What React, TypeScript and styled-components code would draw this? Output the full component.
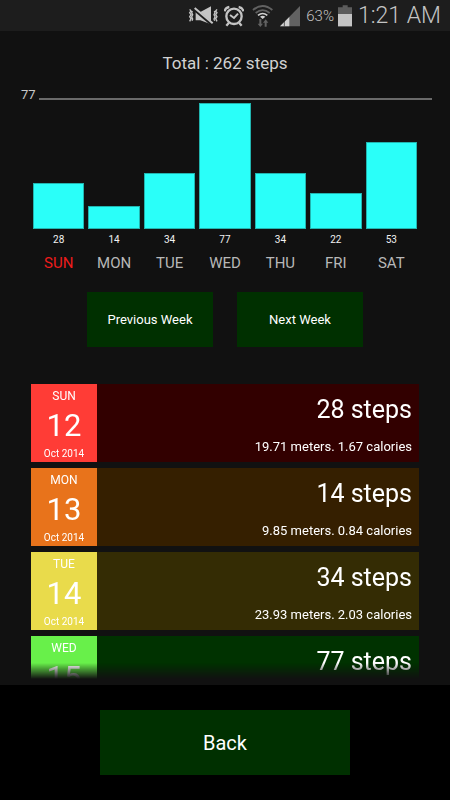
import React from "react";
import styled, { createGlobalStyle } from "styled-components";

const GlobalStyle = createGlobalStyle`
  *, *::before, *::after { box-sizing: border-box; }
  body { margin: 0; background: #000; }
  body, button { font-family: Roboto, "Noto Sans", sans-serif; }
`;

const Screen = styled.div`
  display: flex;
  flex-direction: column;
  height: 100vh;
  background: #000;
  color: #fff;
`;

const StatusBar = styled.header`
  display: flex;
  flex-shrink: 0;
  align-items: center;
  justify-content: flex-end;
  gap: 6px;
  height: 31px;
  padding-right: 9px;
  background: #1d1d1d;
  color: #c4c4c4;
`;

const StatusIcon = styled.svg`
  display: block;
  flex-shrink: 0;
  height: 24px;
`;

const BatteryGroup = styled.div`
  display: flex;
  align-items: center;
  gap: 4px;
  font-size: 15px;
  font-weight: 300;
  line-height: 24px;
`;

const Clock = styled.time`
  font-size: 23px;
  font-weight: 300;
  line-height: 30px;
`;

const Content = styled.main`
  display: flex;
  flex: 1;
  flex-direction: column;
  min-height: 0;
  padding: 20px 18px 6px;
  background: #111;
`;

const Total = styled.h1`
  margin: 0;
  color: #d2d2d2;
  font-size: 17px;
  font-weight: 400;
  line-height: 24px;
  text-align: center;
`;

const ScaleLine = styled.div`
  display: flex;
  align-items: center;
  gap: 3px;
  margin-top: 12px;
  padding-left: 3px;
  color: #c8c8c8;
  font-size: 13px;
  line-height: 16px;
`;

const Rule = styled.span`
  flex: 1;
  height: 2px;
  margin-top: 8px;
  background: #6a6a6a;
`;

const Chart = styled.ul`
  display: grid;
  grid-template-columns: repeat(7, 1fr);
  align-items: end;
  gap: 4px;
  margin: 0 15px;
  padding: 0;
  list-style: none;
  text-align: center;
`;

const Bar = styled.div<{ $height: number }>`
  height: ${(p) => p.$height}px;
  border: 1px solid #22b5b0;
  background: #2afff9;
`;

const BarValue = styled.div`
  margin-top: 4px;
  color: #f2f2f2;
  font-size: 10px;
  line-height: 14px;
`;

const BarDay = styled.div<{ $today?: boolean }>`
  margin-top: 6px;
  color: ${(p) => (p.$today ? "#ee1c1c" : "#b8b8b8")};
  font-size: 15px;
  line-height: 20px;
`;

const WeekNav = styled.nav`
  display: grid;
  grid-template-columns: 1fr 1fr;
  gap: 24px;
  margin: 19px 69px 37px;
`;

const GreenButton = styled.button<{ $large?: boolean }>`
  height: ${(p) => (p.$large ? 65 : 55)}px;
  padding: 0;
  border: 0;
  background: #003000;
  color: #fff;
  font-size: ${(p) => (p.$large ? 20 : 13)}px;
  cursor: pointer;
`;

const DayList = styled.ul`
  display: flex;
  flex: 1;
  flex-direction: column;
  gap: 6px;
  min-height: 0;
  margin: 0 13px;
  padding: 0;
  overflow-y: auto;
  list-style: none;
  scrollbar-width: none;
  mask-image: linear-gradient(to top, transparent 0, #000 16px);
`;

const DayRow = styled.li<{ $shade: string }>`
  display: flex;
  flex-shrink: 0;
  height: 78px;
  background: ${(p) => p.$shade};
`;

const DateTile = styled.div<{ $tint: string }>`
  display: flex;
  flex-direction: column;
  align-items: center;
  width: 66px;
  padding-top: 4px;
  background: ${(p) => p.$tint};
`;

const Weekday = styled.span`
  font-size: 12px;
  line-height: 16px;
`;

const DayNumber = styled.span`
  font-size: 31px;
  line-height: 44px;
`;

const Month = styled.span`
  font-size: 10px;
  line-height: 12px;
`;

const Stats = styled.div`
  display: flex;
  flex: 1;
  flex-direction: column;
  align-items: flex-end;
  padding: 10px 7px 0 0;
`;

const Steps = styled.span`
  font-size: 25px;
  line-height: 32px;
`;

const Details = styled.span`
  margin-top: 13px;
  font-size: 13px;
  line-height: 16px;
`;

const Footer = styled.footer`
  display: grid;
  flex-shrink: 0;
  padding: 25px 100px;
`;

const PX_PER_STEP = 126 / 77;
const METERS_PER_STEP = 0.7039;
const CALORIES_PER_STEP = 0.0597;

const week = [
  { day: "SUN", steps: 28 },
  { day: "MON", steps: 14 },
  { day: "TUE", steps: 34 },
  { day: "WED", steps: 77 },
  { day: "THU", steps: 34 },
  { day: "FRI", steps: 22 },
  { day: "SAT", steps: 53 },
];

const days = [
  { day: "SUN", date: 12, steps: 28, tint: "#ff3c36", shade: "#320000" },
  { day: "MON", date: 13, steps: 14, tint: "#e8731b", shade: "#351f00" },
  { day: "TUE", date: 14, steps: 34, tint: "#e9db4b", shade: "#342c04" },
  { day: "WED", date: 15, steps: 77, tint: "#68f04a", shade: "#003200" },
];

function MutedVibrateIcon() {
  return (
    <StatusIcon width="30" viewBox="27 9 90 72" fill="none" stroke="#c4c4c4" aria-label="Vibrate">
      <path d="M32 25l4 5-4 5 4 6-4 6 4 6-4 8M40 30l-2 5 3 6-3 6 3 7-2 5M106 30l2 5-3 6 3 6-3 7 2 5M114 25l-4 5 4 5-4 6 4 6-4 6 4 8" strokeWidth="4" />
      <path d="M50 33h14L96 16v54L64 58H50z" fill="#c4c4c4" stroke="none" />
      <path d="M46 25l53 45" stroke="#1d1d1d" strokeWidth="10" />
      <path d="M47 21l54 46" strokeWidth="6" />
    </StatusIcon>
  );
}

function AlarmIcon() {
  return (
    <StatusIcon width="20" viewBox="133 9 60 72" fill="none" stroke="#c4c4c4" aria-label="Alarm">
      <circle cx="163" cy="46" r="23" strokeWidth="7" />
      <path d="M135 31q2-11 14-13M191 31q-2-11-14-13" strokeWidth="7" />
      <path d="M148 65l-8 9M178 65l8 9" strokeWidth="7" />
      <path d="M151 42l12 9 12-13" strokeWidth="6" />
    </StatusIcon>
  );
}

function WifiIcon() {
  return (
    <StatusIcon width="24" viewBox="212 9 72 72" fill="none" stroke="#626262" aria-label="Wi-Fi">
      <path d="M221 27q29-24 58 0" strokeWidth="6" />
      <path d="M229 36q21-17 42 0" strokeWidth="5" />
      <path d="M236 43q14-11 28 0" stroke="#d0d0d0" strokeWidth="5" />
      <path d="M242 47q8-6 16 0l-8 7z" fill="#d0d0d0" stroke="none" />
      <path d="M240 54h6v14h5l-8 10-8-10h5zM256 77h6V65h5l-8-10-8 10h5z" fill="#626262" stroke="none" />
    </StatusIcon>
  );
}

function SignalIcon() {
  return (
    <StatusIcon width="20" viewBox="300 9 60 72" aria-label="Signal strength">
      <path d="M300 76l60-61v61z" fill="#626262" />
      <path d="M300 76l28-28v28z" fill="#d0d0d0" />
      <path d="M313 60v16" stroke="#1d1d1d" strokeWidth="2" />
    </StatusIcon>
  );
}

function BatteryIcon() {
  return (
    <StatusIcon width="14" viewBox="84 9 42 72" aria-label="Battery">
      <path d="M98 13h15v6h13v57H84V19h14z" fill="#5c5c5c" />
      <path d="M84 39h42v37H84z" fill="#c4c4c4" />
    </StatusIcon>
  );
}

export default function App() {
  return (
    <Screen>
      <GlobalStyle />
      <StatusBar>
        <MutedVibrateIcon />
        <AlarmIcon />
        <WifiIcon />
        <SignalIcon />
        <BatteryGroup>
          <span>63%</span>
          <BatteryIcon />
        </BatteryGroup>
        <Clock>1:21 AM</Clock>
      </StatusBar>
      <Content>
        <Total>Total : 262 steps</Total>
        <ScaleLine>
          <span>77</span>
          <Rule />
        </ScaleLine>
        <Chart>
          {week.map(({ day, steps }) => (
            <li key={day}>
              <Bar $height={Math.round(steps * PX_PER_STEP)} />
              <BarValue>{steps}</BarValue>
              <BarDay $today={day === "SUN"}>{day}</BarDay>
            </li>
          ))}
        </Chart>
        <WeekNav>
          <GreenButton type="button">Previous Week</GreenButton>
          <GreenButton type="button">Next Week</GreenButton>
        </WeekNav>
        <DayList>
          {days.map(({ day, date, steps, tint, shade }) => (
            <DayRow key={date} $shade={shade}>
              <DateTile $tint={tint}>
                <Weekday>{day}</Weekday>
                <DayNumber>{date}</DayNumber>
                <Month>Oct 2014</Month>
              </DateTile>
              <Stats>
                <Steps>{steps} steps</Steps>
                <Details>
                  {`${(steps * METERS_PER_STEP).toFixed(2)} meters. ${(steps * CALORIES_PER_STEP).toFixed(2)} calories`}
                </Details>
              </Stats>
            </DayRow>
          ))}
        </DayList>
      </Content>
      <Footer>
        <GreenButton type="button" $large>
          Back
        </GreenButton>
      </Footer>
    </Screen>
  );
}
